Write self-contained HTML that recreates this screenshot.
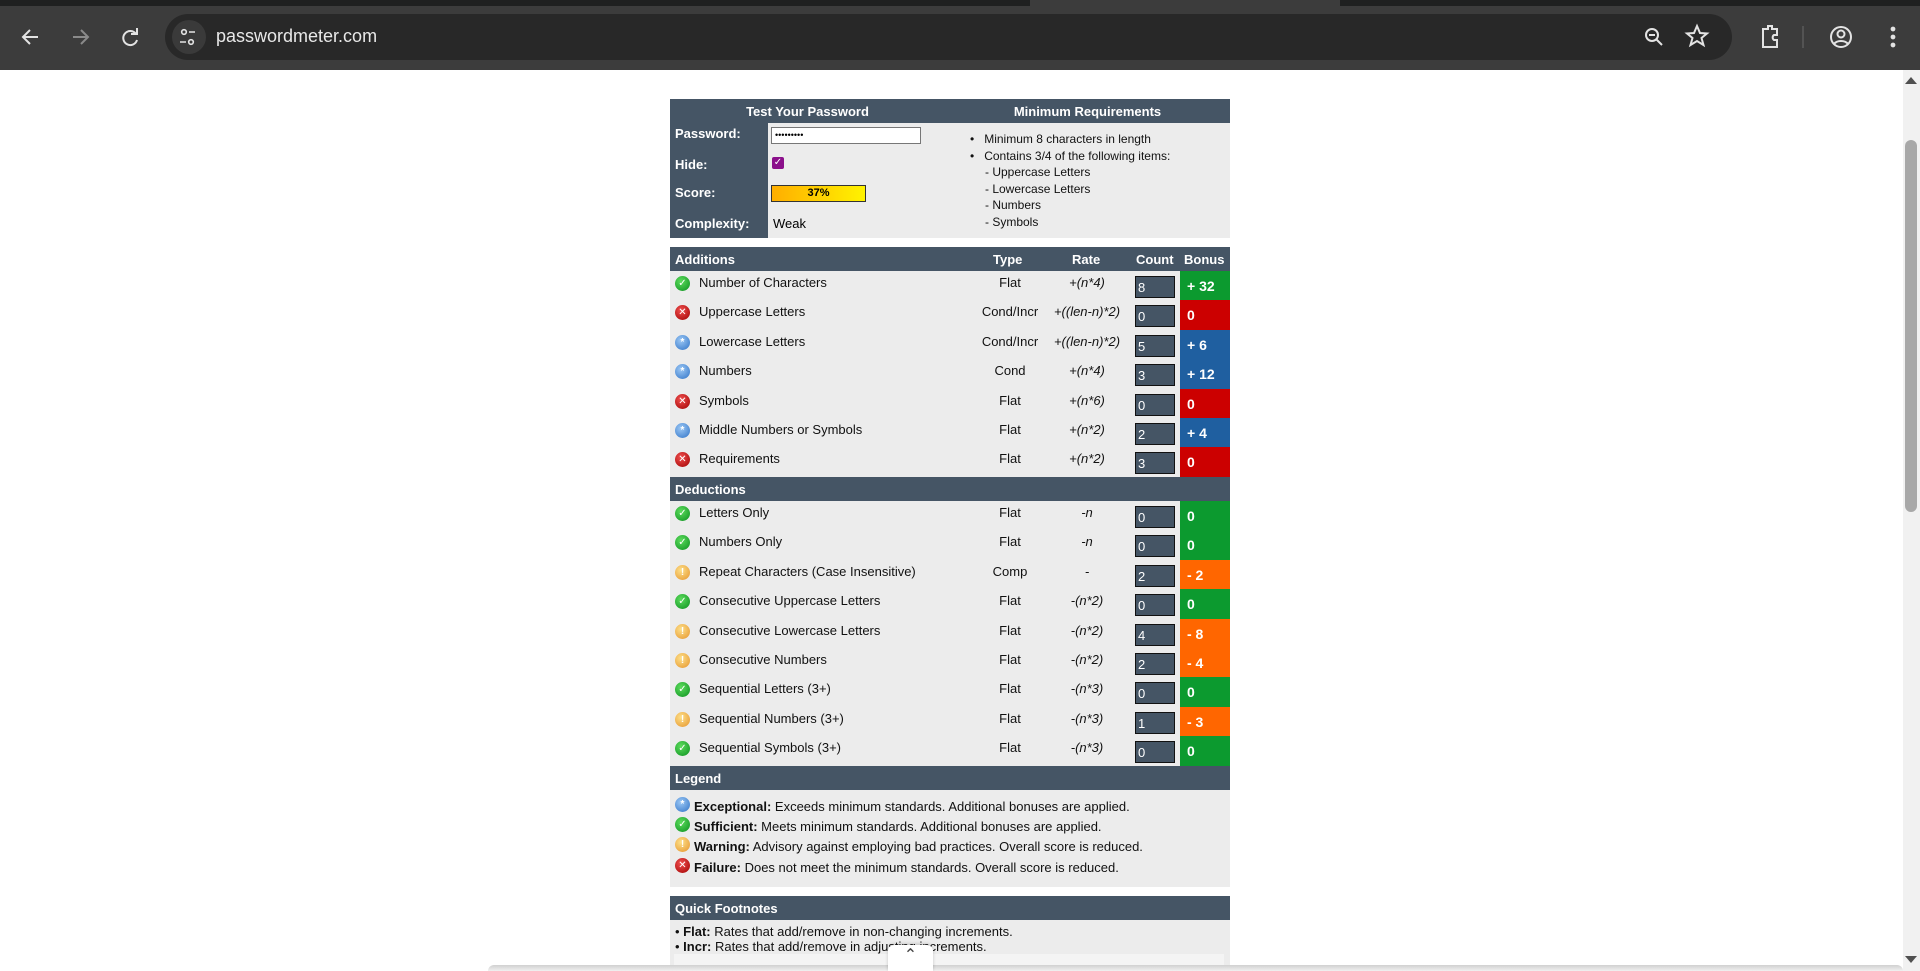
<!DOCTYPE html>
<html><head><meta charset="utf-8"><style>
*{margin:0;padding:0;box-sizing:border-box}
body{width:1920px;height:971px;overflow:hidden;background:#fff;font-family:"Liberation Sans","DejaVu Sans",sans-serif;position:relative}
.a{position:absolute}
.hd{position:absolute;left:670px;width:560px;background:#455565;color:#fff;font-weight:bold;font-size:13px}
.bd{position:absolute;left:670px;width:560px;background:#ececec;font-size:13px;color:#111}
.row{position:absolute;left:670px;width:560px;height:29.4px;font-size:13px;color:#111}
.row .ic{position:absolute;left:5px;top:5px;width:15px;height:15px;border-radius:50%;color:#fff;font-size:10px;line-height:15px;text-align:center;font-weight:bold}
.row .t{position:absolute;left:29px;top:4px}
.row .ty{position:absolute;left:290px;width:100px;text-align:center;top:4px}
.row .r{position:absolute;left:357px;width:120px;text-align:center;top:4px;font-style:italic}
.row .c{position:absolute;left:465px;top:5px;width:40px;height:22px;background:#455565;border:1px solid #111;color:#fff;padding-left:2px;line-height:22px;font-size:13px}
.row .b{position:absolute;left:510px;top:0;width:50px;height:29.4px;color:#fff;font-weight:bold;padding-left:7px;line-height:30px;font-size:14px}
.g{background:#0c9a2f}.re{background:#cc0000}.bl{background:#1f5fa0}.or{background:#ff6600}
.ig{background:radial-gradient(circle at 40% 35%,#5ddc5d,#0a8f1e)}
.ir{background:radial-gradient(circle at 40% 35%,#f05050,#a00000)}
.ib{background:radial-gradient(circle at 40% 35%,#9cc8f5,#2f72c6)}
.io{background:radial-gradient(circle at 40% 35%,#fde08a,#e5932a)}
.lb{position:absolute;left:675px;color:#fff;font-weight:bold;font-size:13px}
</style></head><body>
<div class="a" style="left:0;top:0;width:1920px;height:6px;background:#1f2020"></div>
<div class="a" style="left:1030px;top:0;width:310px;height:8px;background:#3c3c3c"></div>
<div class="a" style="left:0;top:6px;width:1920px;height:64px;background:#3c3c3c"></div>
<div class="a" style="left:165px;top:14px;width:1567px;height:46px;border-radius:23px;background:#282828"></div>
<div class="a" style="left:172px;top:20px;width:34px;height:34px;border-radius:17px;background:#3a3a3a"></div>
<svg class="a" style="left:0;top:14px" width="220" height="46" viewBox="0 0 220 46" fill="none" stroke="#e3e3e3" stroke-width="2">
<path d="M38 23H24M30 16l-7 7 7 7"/>
<path d="M73 23h14M81 16l7 7-7 7" stroke="#8a8a8a"/>
<path d="M136 20a7 7 0 1 0 1 6M137 14v6h-6"/>
<circle cx="184" cy="18" r="2.3" stroke-width="1.6"/><path d="M189 18h6M180 28h6" stroke-width="1.6"/><circle cx="191" cy="28" r="2.3" stroke-width="1.6"/>
</svg>
<div class="a" style="left:216px;top:26px;font-size:18px;color:#e8e8e8;font-family:'Liberation Sans',sans-serif">passwordmeter.com</div>
<svg class="a" style="left:1635px;top:14px" width="285" height="46" viewBox="0 0 285 46" fill="none" stroke="#e3e3e3" stroke-width="2">
<circle cx="17" cy="21" r="6"/><path d="M21 25l6 6M14 21h6"/>
<path d="M62 12l3 7 7 .5-5.5 4.5 2 7-6.5-4-6.5 4 2-7-5.5-4.5 7-.5z"/>
<path d="M128 15h5v-3h4v3h5v6h-3a3 3 0 0 0 0 5h3v7h-14z"/>
<path d="M168 12v22" stroke="#6a6a6a" stroke-width="1"/>
<circle cx="206" cy="23" r="10"/><circle cx="206" cy="20" r="3.5"/><path d="M199 30c3-4 11-4 14 0"/>
<circle cx="258" cy="15" r="1.4" fill="#e3e3e3"/><circle cx="258" cy="23" r="1.4" fill="#e3e3e3"/><circle cx="258" cy="31" r="1.4" fill="#e3e3e3"/>
</svg>
<div class="a" style="left:1903px;top:70px;width:17px;height:901px;background:#f1f1f1"></div>
<div class="a" style="left:1905px;top:140px;width:12px;height:372px;border-radius:6px;background:#a8a8a8"></div>
<div class="a" style="left:1905px;top:77px;width:0;height:0;border-left:6px solid transparent;border-right:6px solid transparent;border-bottom:7px solid #505050"></div>
<div class="a" style="left:1905px;top:956px;width:0;height:0;border-left:6px solid transparent;border-right:6px solid transparent;border-top:7px solid #505050"></div>

<div class="hd" style="top:99px;height:24px"></div>
<div class="a" style="left:670px;top:104px;width:275px;text-align:center;color:#fff;font-weight:bold;font-size:13px">Test Your Password</div>
<div class="a" style="left:945px;top:104px;width:285px;text-align:center;color:#fff;font-weight:bold;font-size:13px">Minimum Requirements</div>
<div class="bd" style="top:123px;height:115px"></div>
<div class="a" style="left:670px;top:123px;width:98px;height:115px;background:#455565"></div>
<div class="lb" style="top:126px">Password:</div>
<div class="lb" style="top:157px">Hide:</div>
<div class="lb" style="top:185px">Score:</div>
<div class="lb" style="top:216px">Complexity:</div>
<div class="a" style="left:771px;top:127px;width:150px;height:17px;background:#fff;border:1px solid #777;font-size:9px;padding-left:3px;line-height:14px">•••••••••</div>
<div class="a" style="left:772px;top:157px;width:12px;height:12px;background:#8b0f8b;border-radius:2px;color:#fff;font-size:10px;line-height:12px;text-align:center">✓</div>
<div class="a" style="left:771px;top:185px;width:95px;height:17px;border:1px solid #333;background:linear-gradient(90deg,#ffae00,#ffd000 50%,#fff300);font-size:11px;font-weight:bold;text-align:center;line-height:15px">37%</div>
<div class="a" style="left:773px;top:216px;font-size:13px">Weak</div>
<div class="a" style="left:970px;top:131px;font-size:12px;line-height:16.6px;color:#111">
<div>•&nbsp;&nbsp;&nbsp;Minimum 8 characters in length</div>
<div>•&nbsp;&nbsp;&nbsp;Contains 3/4 of the following items:</div>
<div style="padding-left:15px">- Uppercase Letters<br>- Lowercase Letters<br>- Numbers<br>- Symbols</div>
</div>

<div class="hd" style="top:247px;height:24px"></div>
<div class="a" style="left:675px;top:252px;color:#fff;font-weight:bold;font-size:13px">Additions</div>
<div class="a" style="left:993px;top:252px;color:#fff;font-weight:bold;font-size:13px">Type</div>
<div class="a" style="left:1072px;top:252px;color:#fff;font-weight:bold;font-size:13px">Rate</div>
<div class="a" style="left:1136px;top:252px;color:#fff;font-weight:bold;font-size:13px">Count</div>
<div class="a" style="left:1184px;top:252px;color:#fff;font-weight:bold;font-size:13px">Bonus</div>
<div class="bd" style="top:271px;height:206px"></div>
<div class="row" style="top:271px"><span class="ic ig">✓</span><span class="t">Number of Characters</span><span class="ty">Flat</span><span class="r">+(n*4)</span><span class="c">8</span><span class="b g">+ 32</span></div>
<div class="row" style="top:300.4px"><span class="ic ir">✕</span><span class="t">Uppercase Letters</span><span class="ty">Cond/Incr</span><span class="r">+((len-n)*2)</span><span class="c">0</span><span class="b re">0</span></div>
<div class="row" style="top:329.8px"><span class="ic ib">*</span><span class="t">Lowercase Letters</span><span class="ty">Cond/Incr</span><span class="r">+((len-n)*2)</span><span class="c">5</span><span class="b bl">+ 6</span></div>
<div class="row" style="top:359.2px"><span class="ic ib">*</span><span class="t">Numbers</span><span class="ty">Cond</span><span class="r">+(n*4)</span><span class="c">3</span><span class="b bl">+ 12</span></div>
<div class="row" style="top:388.6px"><span class="ic ir">✕</span><span class="t">Symbols</span><span class="ty">Flat</span><span class="r">+(n*6)</span><span class="c">0</span><span class="b re">0</span></div>
<div class="row" style="top:418px"><span class="ic ib">*</span><span class="t">Middle Numbers or Symbols</span><span class="ty">Flat</span><span class="r">+(n*2)</span><span class="c">2</span><span class="b bl">+ 4</span></div>
<div class="row" style="top:447.4px"><span class="ic ir">✕</span><span class="t">Requirements</span><span class="ty">Flat</span><span class="r">+(n*2)</span><span class="c">3</span><span class="b re">0</span></div>

<div class="hd" style="top:477px;height:24px"></div>
<div class="a" style="left:675px;top:482px;color:#fff;font-weight:bold;font-size:13px">Deductions</div>
<div class="bd" style="top:501px;height:265px"></div>
<div class="row" style="top:501px"><span class="ic ig">✓</span><span class="t">Letters Only</span><span class="ty">Flat</span><span class="r">-n</span><span class="c">0</span><span class="b g">0</span></div>
<div class="row" style="top:530.4px"><span class="ic ig">✓</span><span class="t">Numbers Only</span><span class="ty">Flat</span><span class="r">-n</span><span class="c">0</span><span class="b g">0</span></div>
<div class="row" style="top:559.8px"><span class="ic io">!</span><span class="t">Repeat Characters (Case Insensitive)</span><span class="ty">Comp</span><span class="r">-</span><span class="c">2</span><span class="b or">- 2</span></div>
<div class="row" style="top:589.2px"><span class="ic ig">✓</span><span class="t">Consecutive Uppercase Letters</span><span class="ty">Flat</span><span class="r">-(n*2)</span><span class="c">0</span><span class="b g">0</span></div>
<div class="row" style="top:618.6px"><span class="ic io">!</span><span class="t">Consecutive Lowercase Letters</span><span class="ty">Flat</span><span class="r">-(n*2)</span><span class="c">4</span><span class="b or">- 8</span></div>
<div class="row" style="top:648px"><span class="ic io">!</span><span class="t">Consecutive Numbers</span><span class="ty">Flat</span><span class="r">-(n*2)</span><span class="c">2</span><span class="b or">- 4</span></div>
<div class="row" style="top:677.4px"><span class="ic ig">✓</span><span class="t">Sequential Letters (3+)</span><span class="ty">Flat</span><span class="r">-(n*3)</span><span class="c">0</span><span class="b g">0</span></div>
<div class="row" style="top:706.8px"><span class="ic io">!</span><span class="t">Sequential Numbers (3+)</span><span class="ty">Flat</span><span class="r">-(n*3)</span><span class="c">1</span><span class="b or">- 3</span></div>
<div class="row" style="top:736.2px"><span class="ic ig">✓</span><span class="t">Sequential Symbols (3+)</span><span class="ty">Flat</span><span class="r">-(n*3)</span><span class="c">0</span><span class="b g">0</span></div>

<div class="hd" style="top:766px;height:24px"></div>
<div class="a" style="left:675px;top:771px;color:#fff;font-weight:bold;font-size:13px">Legend</div>
<div class="bd" style="top:790px;height:97px"></div>
<div class="row" style="top:792px"><span class="ic ib" style="left:5px;top:5px">*</span><span class="t" style="left:24px;top:7px"><b>Exceptional:</b> Exceeds minimum standards. Additional bonuses are applied.</span></div>
<div class="row" style="top:812px"><span class="ic ig" style="left:5px;top:5px">✓</span><span class="t" style="left:24px;top:7px"><b>Sufficient:</b> Meets minimum standards. Additional bonuses are applied.</span></div>
<div class="row" style="top:832px"><span class="ic io" style="left:5px;top:5px">!</span><span class="t" style="left:24px;top:7px"><b>Warning:</b> Advisory against employing bad practices. Overall score is reduced.</span></div>
<div class="row" style="top:853px"><span class="ic ir" style="left:5px;top:5px">✕</span><span class="t" style="left:24px;top:7px"><b>Failure:</b> Does not meet the minimum standards. Overall score is reduced.</span></div>

<div class="hd" style="top:896px;height:24px"></div>
<div class="a" style="left:675px;top:901px;color:#fff;font-weight:bold;font-size:13px">Quick Footnotes</div>
<div class="bd" style="top:920px;height:51px"></div>
<div class="a" style="left:675px;top:924px;font-size:13px;line-height:15px;color:#111">• <b>Flat:</b> Rates that add/remove in non-changing increments.<br>• <b>Incr:</b> Rates that add/remove in adjusting increments.</div>
<div class="a" style="left:674px;top:954px;width:550px;height:17px;background:#f4f4f4"></div>
<div class="a" style="left:488px;top:965px;width:1415px;height:6px;background:linear-gradient(#d0d0d0,#f0f0f0);border-radius:6px 6px 0 0"></div>
<div class="a" style="left:888px;top:945px;width:45px;height:26px;background:#fff;border-radius:6px 6px 0 0;box-shadow:0 -1px 3px rgba(0,0,0,.2);text-align:center;font-size:16px;color:#444;line-height:22px">⌃</div>
</body></html>
